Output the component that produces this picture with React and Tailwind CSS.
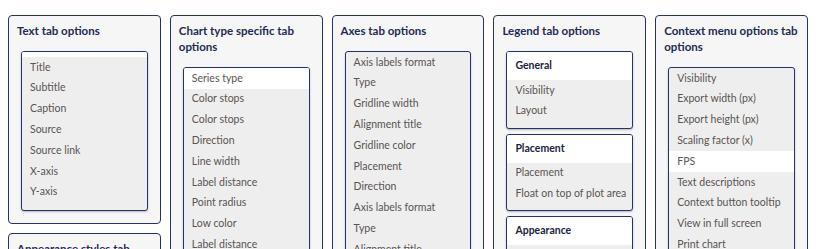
import React from "react";

const font = { fontFamily: "Lato, 'Noto Sans', sans-serif" };

function Item({ label, active }) {
    return (
        <div className={`flex h-[20.8px] items-center whitespace-nowrap px-[8px] text-[10.5px] text-[#5a5452] ${active ? "bg-white" : ""}`}>
            {label}
        </div>
    );
}

function List({ items, active, topGap }) {
    return (
        <div className="mx-[4px] overflow-hidden rounded-[3px] border border-[#26336a] bg-[#eeeeee] shadow-[0_1px_2px_rgba(0,0,0,0.25)]">
            {topGap && <div className="h-[5px] bg-white" />}
            {items.map((it, i) => (
                <Item key={i} label={it} active={i === active} />
            ))}
            <div className="h-[7px]" />
        </div>
    );
}

function Group({ title, items }) {
    return (
        <div className="mx-[4px] overflow-hidden rounded-[3px] border border-[#26336a] bg-[#eeeeee] shadow-[0_1px_2px_rgba(0,0,0,0.25)]">
            <div className="flex h-[28px] items-center bg-white px-[8px] text-[10.5px] font-bold text-[#1c2440]">{title}</div>
            {items.map((it, i) => (
                <Item key={i} label={it} />
            ))}
            <div className="h-[6px]" />
        </div>
    );
}

function Card({ title, children, className = "" }) {
    return (
        <div className={`rounded-[4px] border border-[#26336a] bg-[#f6f6f6] px-[8px] pt-[7px] pb-[12px] ${className}`}>
            <h3 className="mb-[12px] text-[11.5px] font-bold leading-[16px] text-[#1f2b55]">{title}</h3>
            {children}
        </div>
    );
}

export default function App() {
    return (
        <div style={font} className="h-[249px] overflow-hidden bg-white pl-[8px] pr-[10px] pt-[15px]">
            <div className="grid grid-cols-5 items-start gap-[9px]">
                <div className="flex flex-col gap-[9px]">
                    <Card title="Text tab options">
                        <List topGap items={["Title", "Subtitle", "Caption", "Source", "Source link", "X-axis", "Y-axis"]} />
                    </Card>
                    <Card title="Appearance styles tab options">
                        <List items={["Font", "Background color"]} />
                    </Card>
                </div>

                <Card title="Chart type specific tab options">
                    <List
                        active={0}
                        items={[
                            "Series type",
                            "Color stops",
                            "Color stops",
                            "Direction",
                            "Line width",
                            "Label distance",
                            "Point radius",
                            "Low color",
                            "Label distance",
                            "Point radius",
                        ]}
                    />
                </Card>

                <Card title="Axes tab options">
                    <List
                        items={[
                            "Axis labels format",
                            "Type",
                            "Gridline width",
                            "Alignment title",
                            "Gridline color",
                            "Placement",
                            "Direction",
                            "Axis labels format",
                            "Type",
                            "Alignment title",
                        ]}
                    />
                </Card>

                <Card title="Legend tab options">
                    <div className="flex flex-col gap-[5px]">
                        <Group title="General" items={["Visibility", "Layout"]} />
                        <Group title="Placement" items={["Placement", "Float on top of plot area"]} />
                        <Group title="Appearance" items={["Font", "Background color"]} />
                    </div>
                </Card>

                <Card title="Context menu options tab options">
                    <List
                        active={4}
                        items={[
                            "Visibility",
                            "Export width (px)",
                            "Export height (px)",
                            "Scaling factor (x)",
                            "FPS",
                            "Text descriptions",
                            "Context button tooltip",
                            "View in full screen",
                            "Print chart",
                            "Download PNG",
                        ]}
                    />
                </Card>
            </div>
        </div>
    );
}
